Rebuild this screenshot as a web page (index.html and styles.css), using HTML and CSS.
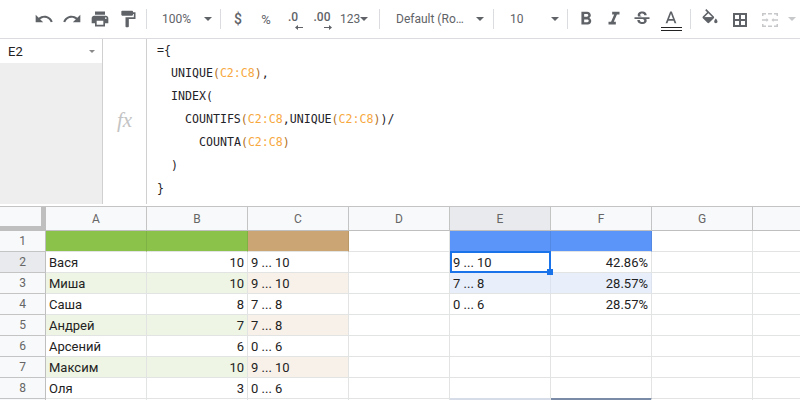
FILE: index.html
```html
<!DOCTYPE html>
<html lang="ru">
<head>
<meta charset="utf-8">
<title>Sheet</title>
<link rel="stylesheet" href="styles.css">
</head>
<body>
<div class="toolbar">
  <div class="btn w28"><svg class="ic" viewBox="0 0 24 24"><path d="M12.5 8c-2.65 0-5.05.99-6.9 2.6L2 7v9h9l-3.62-3.62c1.39-1.16 3.16-1.88 5.12-1.88 3.54 0 6.55 2.31 7.6 5.5l2.37-.78C21.08 11.03 17.15 8 12.5 8z"/></svg></div>
  <div class="btn w28"><svg class="ic" viewBox="0 0 24 24"><path d="M18.4 10.6C16.55 8.99 14.15 8 11.5 8c-4.65 0-8.58 3.03-9.96 7.22L3.9 16c1.05-3.19 4.05-5.5 7.6-5.5 1.95 0 3.73.72 5.12 1.88L13 16h9V7l-3.6 3.6z"/></svg></div>
  <div class="btn w28"><svg class="ic" viewBox="0 0 24 24"><path d="M19 8H5c-1.66 0-3 1.34-3 3v6h4v4h12v-4h4v-6c0-1.66-1.34-3-3-3zm-3 11H8v-5h8v5zm3-7c-.55 0-1-.45-1-1s.45-1 1-1 1 .45 1 1-.45 1-1 1zm-1-9H6v4h12V3z"/></svg></div>
  <div class="btn w28"><svg class="ic" viewBox="0 0 24 24"><path d="M18 4V3c0-.55-.45-1-1-1H5c-.55 0-1 .45-1 1v4c0 .55.45 1 1 1h12c.55 0 1-.45 1-1V6h1v4H9v11c0 .55.45 1 1 1h2c.55 0 1-.45 1-1v-9h8V4h-3z"/></svg></div>
  <div class="sep ml4"></div>
  <div class="drop zoomsel"><span>100%</span><i class="arrow"></i></div>
  <div class="sep"></div>
  <div class="btn w28 ml3 sym bold">$</div>
  <div class="btn w28 sym">%</div>
  <div class="btn w26 dec"><span>.0</span><svg class="mini" viewBox="0 0 8 5"><path d="M0 2.5 3 0v2h5v1H3v2z"/></svg></div>
  <div class="btn w30 ml1 dec"><span>.00</span><svg class="mini" viewBox="0 0 8 5"><path d="M8 2.5 5 0v2H0v1h5v2z"/></svg></div>
  <div class="drop numsel"><span>123</span><i class="arrow"></i></div>
  <div class="sep ml2"></div>
  <div class="drop fontsel"><span>Default (Ro…</span><i class="arrow"></i></div>
  <div class="sep"></div>
  <div class="drop sizesel"><span>10</span><i class="arrow"></i></div>
  <div class="sep"></div>
  <div class="btn w28 ml4"><svg class="ic ic22" viewBox="0 0 24 24"><path d="M15.6 10.79c.97-.67 1.65-1.77 1.65-2.79 0-2.26-1.75-4-4-4H7v14h7.04c2.09 0 3.71-1.7 3.71-3.79 0-1.52-.86-2.82-2.15-3.42zM10 6.5h3c.83 0 1.5.67 1.5 1.5s-.67 1.5-1.5 1.5h-3v-3zm3.5 9H10v-3h3.5c.83 0 1.5.67 1.5 1.5s-.67 1.5-1.5 1.500z"/></svg></div>
  <div class="btn w28"><svg class="ic ic22" viewBox="0 0 24 24"><path d="M10 4v3h2.21l-3.42 8H6v3h8v-3h-2.21l3.42-8H18V4z"/></svg></div>
  <div class="btn w28"><svg class="ic" viewBox="0 0 24 24"><path d="M7.24 8.75c-.26-.48-.39-1.03-.39-1.67 0-.61.13-1.16.4-1.67.26-.5.63-.93 1.11-1.29.48-.35 1.05-.63 1.7-.83.66-.19 1.39-.29 2.18-.29.81 0 1.54.11 2.21.34.66.22 1.23.54 1.69.94.47.4.83.88 1.08 1.43.25.55.38 1.15.38 1.81h-3.01c0-.31-.05-.59-.15-.85-.09-.27-.24-.49-.44-.68-.2-.19-.45-.33-.75-.44-.3-.1-.66-.16-1.06-.16-.39 0-.74.04-1.03.13-.29.09-.53.21-.72.36-.19.16-.34.34-.44.55-.1.21-.15.43-.15.66 0 .48.25.88.74 1.21.38.25.77.48 1.41.7H7.39c-.05-.08-.11-.17-.15-.25zM21 12v-2H3v2h9.62c.18.07.4.14.55.2.37.17.66.34.87.51.21.17.35.36.43.57.07.2.11.43.11.69 0 .23-.05.45-.14.66-.09.2-.23.38-.42.53-.19.15-.42.26-.71.35-.29.08-.63.13-1.01.13-.43 0-.83-.04-1.18-.13s-.66-.23-.91-.42c-.25-.19-.45-.44-.59-.75-.14-.31-.25-.76-.25-1.21H6.4c0 .55.08 1.13.24 1.58.16.45.37.85.65 1.21.28.35.6.66.98.92.37.26.78.48 1.22.65.44.17.9.3 1.38.39.48.08.96.13 1.44.13.8 0 1.53-.09 2.18-.28s1.21-.45 1.67-.79c.46-.34.82-.77 1.07-1.27s.38-1.07.38-1.71c0-.6-.1-1.14-.31-1.61-.05-.11-.11-.23-.17-.33H21z"/></svg></div>
  <div class="btn w30 colour"><svg class="ic" viewBox="0 0 24 24"><path d="M11 3L5.5 17h2.25l1.12-3h6.25l1.12 3h2.25L13 3h-2zm-1.38 9L12 5.67 14.38 12H9.62z"/></svg><span class="dbl"></span></div>
  <div class="sep ml4"></div>
  <div class="btn w38"><svg class="ic" viewBox="0 0 24 24"><path d="M16.56 8.94L7.62 0 6.21 1.41l2.38 2.38-5.15 5.15c-.59.59-.59 1.54 0 2.12l5.5 5.5c.29.29.68.44 1.06.44s.77-.15 1.06-.44l5.5-5.5c.59-.58.59-1.53 0-2.12zM5.21 10L10 5.21 14.79 10H5.21zM19 11.5s-2 2.17-2 3.5c0 1.1.9 2 2 2s2-.9 2-2c0-1.33-2-3.5-2-3.5z"/><path d="M5 10h10l-5 5z"/></svg></div>
  <div class="btn w22"><svg class="ic14" viewBox="0 0 14 14"><path d="M0 0h14v14H0zM2 2v4h4V2zm6 0v4h4V2zM2 8v4h4V8zm6 0v4h4V8z"/></svg></div>
  <div class="btn w38"><svg class="merge" viewBox="0 0 16 14"><path d="M0 0h4v1.500H1.500V3H0zM6 0h4v1.500H6zM12 0h4v3h-1.500V1.500H12zM0 11h1.500v1.500H4V14H0zM6 12.500h4V14H6zM14.500 11H16v3h-4v-1.500h2.500zM0 6.200h4.500V5l2 2-2 2V7.800H0zM16 6.200h-4.500V5l-2 2 2 2V7.800H16z"/></svg></div>
  <i class="arrow arrow-off"></i>
</div>

<div class="fbar">
  <div class="namecol">
    <div class="namebox"><span>E2</span><i class="arrow arrow-small"></i></div>
    <div class="namefill"></div>
  </div>
  <div class="fxcol"><span class="fx">fx</span></div>
  <div class="formula">
    <div class="fl">={</div>
    <div class="fl i1">UNIQUE<span class="p">(</span><span class="r">C2:C8</span><span class="p">)</span>,</div>
    <div class="fl i1">INDEX(</div>
    <div class="fl i2">COUNTIFS<span class="p">(</span><span class="r">C2:C8</span>,UNIQUE<span class="p">(</span><span class="r">C2:C8</span><span class="p">)</span>)/</div>
    <div class="fl i3">COUNTA<span class="p">(</span><span class="r">C2:C8</span><span class="p">)</span></div>
    <div class="fl i1">)</div>
    <div class="fl">}</div>
  </div>
</div>
<div class="gap"></div>

<div class="sheet">
  <div class="corner"></div>
  <div class="ch">A</div><div class="ch">B</div><div class="ch">C</div><div class="ch">D</div><div class="ch on">E</div><div class="ch">F</div><div class="ch">G</div><div class="ch"></div>

  <div class="rh">1</div>
  <div class="c green"></div><div class="c green"></div><div class="c tan"></div><div class="c"></div><div class="c blue"></div><div class="c blue"></div><div class="c"></div><div class="c"></div>

  <div class="rh on">2</div>
  <div class="c">Вася</div><div class="c n">10</div><div class="c">9 ... 10</div><div class="c"></div><div class="c sel">9 ... 10<span class="selbox"></span><span class="handle"></span></div><div class="c n">42.86%</div><div class="c"></div><div class="c"></div>

  <div class="rh">3</div>
  <div class="c lg">Миша</div><div class="c lg n">10</div><div class="c lt">9 ... 10</div><div class="c"></div><div class="c lb">7 ... 8</div><div class="c lb n">28.57%</div><div class="c"></div><div class="c"></div>

  <div class="rh">4</div>
  <div class="c">Саша</div><div class="c n">8</div><div class="c">7 ... 8</div><div class="c"></div><div class="c">0 ... 6</div><div class="c n">28.57%</div><div class="c"></div><div class="c"></div>

  <div class="rh">5</div>
  <div class="c lg">Андрей</div><div class="c lg n">7</div><div class="c lt">7 ... 8</div><div class="c"></div><div class="c"></div><div class="c"></div><div class="c"></div><div class="c"></div>

  <div class="rh">6</div>
  <div class="c">Арсений</div><div class="c n">6</div><div class="c">0 ... 6</div><div class="c"></div><div class="c"></div><div class="c"></div><div class="c"></div><div class="c"></div>

  <div class="rh">7</div>
  <div class="c lg">Максим</div><div class="c lg n">10</div><div class="c lt">9 ... 10</div><div class="c"></div><div class="c"></div><div class="c"></div><div class="c"></div><div class="c"></div>

  <div class="rh">8</div>
  <div class="c">Оля</div><div class="c n">3</div><div class="c">0 ... 6</div><div class="c"></div><div class="c chart-a"></div><div class="c chart-b"></div><div class="c"></div><div class="c"></div>

  <div class="rh"></div>
  <div class="c"></div><div class="c"></div><div class="c"></div><div class="c"></div><div class="c fill-a"></div><div class="c fill-b"></div><div class="c"></div><div class="c"></div>
</div>
</body>
</html>
```

FILE: styles.css
```css
* { box-sizing: border-box; }
html, body { margin: 0; height: 400px; overflow: hidden; background: #fff; }
body { font-family: Roboto, "Liberation Sans", sans-serif; font-size: 13px; color: #222; }

.toolbar { display: flex; align-items: center; height: 39px; padding-left: 30px; border-bottom: 1px solid #dadce0; color: #5f6368; font-size: 12px; white-space: nowrap; }
.btn { display: flex; align-items: center; justify-content: center; flex: none; height: 28px; position: relative; }
.w22 { width: 22px; } .w26 { width: 26px; } .w28 { width: 28px; } .w30 { width: 30px; } .w38 { width: 38px; }
.ml1 { margin-left: 1px; } .ml2 { margin-left: 2px; } .ml3 { margin-left: 3px; } .ml4 { margin-left: 4px; }
.ic { width: 20px; height: 20px; fill: #5f6368; }
.ic22 { width: 22px; height: 22px; }
.ic14 { width: 14px; height: 14px; fill: #5f6368; margin-top: 1px; }
.merge { width: 16px; height: 14px; fill: #c6c8ca; margin-top: 1px; }
.sep { flex: none; width: 1px; height: 20px; background: #dadce0; }
.drop { display: flex; align-items: center; justify-content: space-between; flex: none; height: 28px; }
.zoomsel { width: 73px; padding: 0 8px 0 15px; }
.numsel { width: 40px; padding: 0 9px 0 3px; }
.fontsel { width: 113px; padding: 0 9px 0 16px; }
.sizesel { width: 73px; padding: 0 8px 0 16px; }
.arrow { display: block; width: 0; height: 0; border-left: 4px solid transparent; border-right: 4px solid transparent; border-top: 4px solid #5f6368; }
.arrow-off { border-top-color: #c6c8ca; margin-left: -1px; }
.arrow-small { border-left-width: 3px; border-right-width: 3px; border-top: 3px solid #8a8a8a; }
.sym { font-size: 13px; }
.bold { font-weight: 500; font-size: 14px; }
.dec { flex-direction: column; font-weight: 500; font-size: 12px; line-height: 13px; padding-top: 2px; }
.mini { width: 8px; height: 5px; fill: #5f6368; margin: 1px 0 0 12px; }
.colour { flex-direction: column; }
.dbl { position: absolute; left: 5px; top: 22px; width: 21px; height: 4px; border-top: 1px solid #222; border-bottom: 1px solid #222; }

.fbar { display: flex; height: 165px; }
.namecol { display: flex; flex-direction: column; width: 103px; border-right: 1px solid #d0d0d0; }
.namebox { display: flex; align-items: center; justify-content: space-between; height: 24px; padding: 0 7px 0 8px; color: #222; }
.namefill { flex: 1; background: #eeeeee; }
.fxcol { display: flex; align-items: center; justify-content: center; width: 44px; border-right: 1px solid #d0d0d0; }
.fx { font-family: "Liberation Serif", serif; font-style: italic; font-size: 21px; line-height: 24px; color: #c4c4c4; margin-bottom: 4px; }
.formula { flex: 1; padding: 0 0 0 10px; font-family: "DejaVu Sans Mono", monospace; font-size: 11.6px; line-height: 23px; color: #1f2328; }
.fl { height: 23px; }
.i1 { padding-left: 14px; } .i2 { padding-left: 28px; } .i3 { padding-left: 42px; }
.r { color: #f7a83e; }
.p { color: #b06f22; }
.gap { height: 2px; }

.sheet { display: grid; grid-template-columns: 46px repeat(8, 101px); grid-template-rows: 24px repeat(9, 21px); border-top: 1px solid #c4c4c4; overflow: hidden; height: 194px; width: 800px; }
.corner { background: #f8f9fa; border-right: 5px solid #bfbfbf; border-bottom: 5px solid #bfbfbf; }
.ch { display: flex; align-items: center; justify-content: center; background: #f8f9fa; border-right: 1px solid #c4c4c4; border-bottom: 1px solid #bfbfbf; color: #666; font-size: 12px; }
.ch.on { background: #e8eaed; }
.rh { display: flex; align-items: center; justify-content: center; background: #f8f9fa; border-right: 1px solid #bfbfbf; border-bottom: 1px solid #c4c4c4; color: #666; font-size: 12px; }
.rh.on { background: #e8eaed; }
.c { position: relative; display: flex; align-items: center; padding: 0 3px; border-right: 1px solid #e2e3e3; border-bottom: 1px solid #e2e3e3; white-space: nowrap; }
.n { justify-content: flex-end; }
.green { background: #8bc34a; border-right-color: #7fb245; }
.tan { background: #cba674; border-right-color: #b99868; }
.blue { background: #5b95f9; border-right-color: #5388e3; }
.lg { background: #eef5e4; }
.lt { background: #f8f1ea; }
.lb { background: #e8effb; border-right-color: #dce3ef; }
.selbox { position: absolute; inset: -1px -1px -1px 0; border: 2px solid #1a73e8; }
.handle { position: absolute; right: -3px; bottom: -3px; width: 6px; height: 6px; background: #1a73e8; z-index: 2; }
.chart-a { border-bottom-color: #d6dde8; }
.chart-b { border-bottom-color: #7a8ba8; }
.fill-a { background: #d6dde8; }
.fill-b { background: #7a8ba8; }
```
